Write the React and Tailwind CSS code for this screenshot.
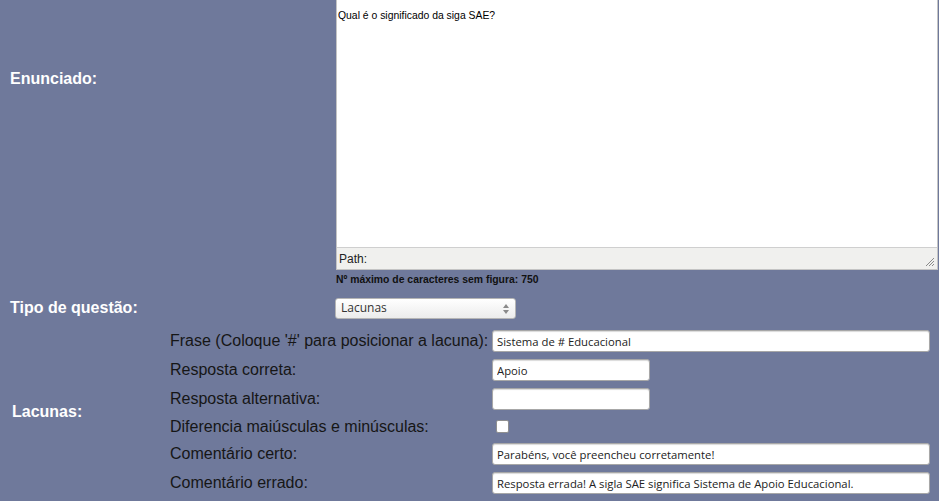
import React from "react";

const field =
  "h-[22px] rounded-[3px] border border-[#a7a7a7] bg-white px-[4px] text-[11.3px] text-[#222] shadow-[inset_0_1px_1px_rgba(0,0,0,0.15)] outline-none";

const openSans = { fontFamily: '"Open Sans", sans-serif' };

const Row = ({ label, children, className = "h-[22px]" }) => (
  <div className={`flex items-center ${className}`}>
    <div className="w-[322px] text-[16px] leading-none text-[#161616]">{label}</div>
    {children}
  </div>
);

const Editor = () => (
  <div className="flex h-[270px] w-[602px] flex-col border-x border-b border-[#c4c4c4] bg-white">
    <div className="flex-1 pl-[1px] pt-[8px] text-[10.4px] text-black">
      Qual é o significado da siga SAE?
    </div>
    <div className="relative flex h-[22px] items-center border-t border-[#cfcfcf] bg-[#f0f0ee] pl-[2px] text-[12px] text-[#222]">
      Path:
      <svg className="absolute bottom-[2px] right-[2px]" width="10" height="10" viewBox="0 0 10 10">
        <path d="M9 1L1 9M9 4L4 9M9 7L7 9" stroke="#8a8a8a" strokeWidth="1" />
      </svg>
    </div>
  </div>
);

export default function App() {
  return (
    <div
      className="h-[501px] w-[939px] overflow-hidden bg-[#6f799b]"
      style={{ fontFamily: '"Liberation Sans", Arial, sans-serif' }}
    >
      <div className="flex">
        <div className="w-[336px] pl-[10px] pt-[67px] text-[16px] font-bold text-white">Enunciado:</div>
        <Editor />
      </div>

      <div className="pl-[336px] pt-[4px] text-[10.4px] font-bold leading-[12px] text-[#111]">
        Nº máximo de caracteres sem figura: 750
      </div>

      <div className="mt-[10px] flex items-center">
        <div className="w-[335px] pl-[10px] text-[16px] font-bold text-white">Tipo de questão:</div>
        <div
          className="relative flex h-[21px] w-[181px] items-center rounded-[3px] border border-[#b5b5b5] bg-gradient-to-b from-white to-[#ececec] pl-[5px] text-[12px] text-[#333]"
          style={openSans}
        >
          Lacunas
          <svg className="absolute right-[6px] top-[5px]" width="6" height="10" viewBox="0 0 6 10">
            <path d="M3 0L6 4H0Z M0 6H6L3 10Z" fill="#8a8a8a" />
          </svg>
        </div>
      </div>

      <div className="mt-[10px] flex items-center">
        <div className="w-[170px] pl-[12px] text-[16px] font-bold text-white">Lacunas:</div>
        <div className="flex flex-col gap-[7px]">
          <Row label="Frase (Coloque '#' para posicionar a lacuna):">
            <input readOnly value="Sistema de # Educacional" className={`${field} w-[438px]`} style={openSans} />
          </Row>
          <Row label="Resposta correta:">
            <input readOnly value="Apoio" className={`${field} w-[158px]`} style={openSans} />
          </Row>
          <Row label="Resposta alternativa:">
            <input readOnly value="" className={`${field} w-[158px]`} style={openSans} />
          </Row>
          <Row label="Diferencia maiúsculas e minúsculas:" className="h-[19px]">
            <div className="ml-[4px] h-[13px] w-[13px] rounded-[2px] border border-[#8f8f8f] bg-white" />
          </Row>
          <Row label="Comentário certo:">
            <input readOnly value="Parabéns, você preencheu corretamente!" className={`${field} w-[438px]`} style={openSans} />
          </Row>
          <Row label="Comentário errado:">
            <input readOnly value="Resposta errada! A sigla SAE significa Sistema de Apoio Educacional." className={`${field} w-[438px]`} style={openSans} />
          </Row>
        </div>
      </div>
    </div>
  );
}
